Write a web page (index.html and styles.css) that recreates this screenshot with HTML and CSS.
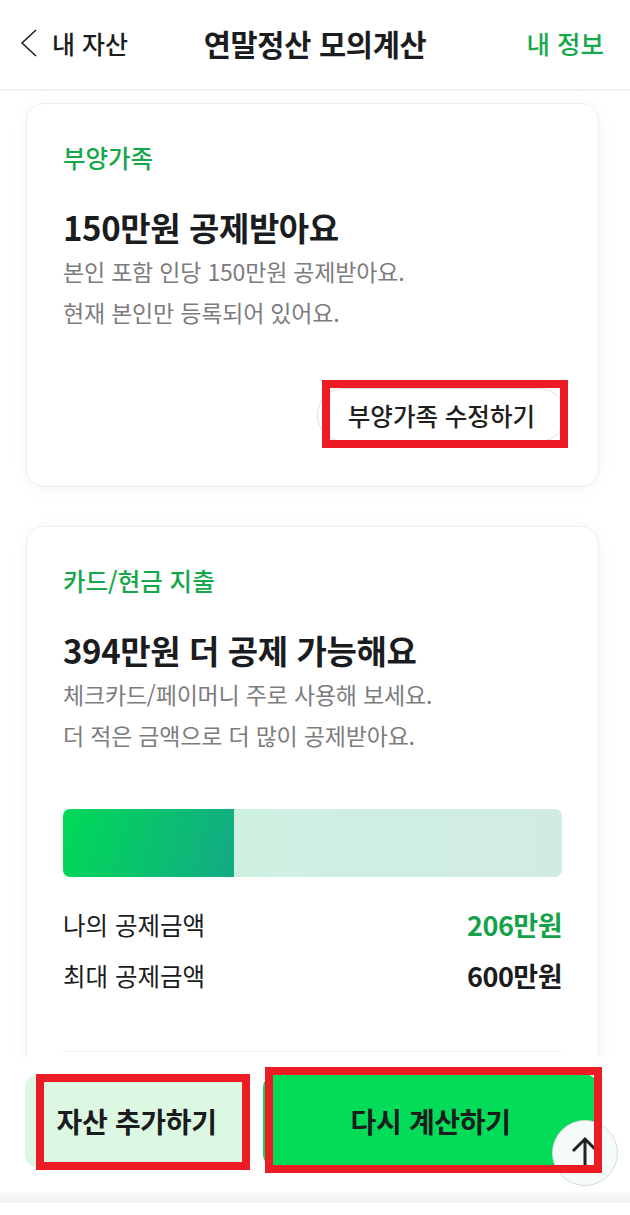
FILE: index.html
```html
<!DOCTYPE html>
<html lang="ko">
<head>
<meta charset="utf-8">
<title>연말정산 모의계산</title>
<link rel="stylesheet" href="styles.css">
</head>
<body>
<header class="topbar">
  <a class="back">
    <svg class="chev" width="18" height="28" viewBox="0 0 18 28"><polyline points="16,1 2,14 16,27" fill="none" stroke="#222" stroke-width="1.6"/></svg>
    <span>내 자산</span>
  </a>
  <h1 class="title">연말정산 모의계산</h1>
  <a class="myinfo">내 정보</a>
</header>

<main class="content">
  <section class="card">
    <div class="label">부양가족</div>
    <h2 class="headline">150만원 공제받아요</h2>
    <p class="desc">본인 포함 인당 150만원 공제받아요.<br>현재 본인만 등록되어 있어요.</p>
    <div class="actions">
      <button class="pill">부양가족 수정하기<span class="mark mark-pill"></span></button>
    </div>
  </section>

  <section class="card">
    <div class="label">카드/현금 지출</div>
    <h2 class="headline">394만원 더 공제 가능해요</h2>
    <p class="desc">체크카드/페이머니 주로 사용해 보세요.<br>더 적은 금액으로 더 많이 공제받아요.</p>
    <div class="bar"><div class="bar-fill" style="width:34.33%"></div></div>
    <div class="rows">
      <div class="row"><span>나의 공제금액</span><strong class="green">206만원</strong></div>
      <div class="row"><span>최대 공제금액</span><strong>600만원</strong></div>
    </div>
    <div class="divider"></div>
  </section>
</main>

<footer class="bottombar">
  <div class="btns">
    <button class="btn btn-light">자산 추가하기<span class="mark mark-light"></span></button>
    <button class="btn btn-green">다시 계산하기<span class="mark mark-green"></span></button>
  </div>
  <div class="band"></div>
  <button class="totop" aria-label="맨 위로">
    <svg width="66" height="66" viewBox="0 0 66 66"><path d="M33 19 V50 M21 31 L33 19 L45 31" fill="none" stroke="#222" stroke-width="3"/></svg>
  </button>
</footer>
</body>
</html>
```
FILE: styles.css
```css
* { box-sizing: border-box; margin: 0; padding: 0; }
html, body {
  width: 630px;
  height: 1215px;
  overflow: hidden;
  background: #fff;
  font-family: "Noto Sans CJK KR", "Noto Sans", sans-serif;
  color: #1b1c1e;
}
button { font-family: inherit; border: none; cursor: pointer; }

.topbar {
  height: 91px;
  border-bottom: 2px solid #f1f1f2;
  display: grid;
  grid-template-columns: 1fr auto 1fr;
  align-items: center;
  padding: 0 26px 3px;
}
.back {
  display: flex;
  align-items: center;
  gap: 14px;
  margin-left: -6px;
  font-size: 25px;
  font-weight: 500;
  line-height: 30px;
}
.chev { display: block; }
.title {
  font-size: 29.5px;
  font-weight: 700;
  line-height: 34px;
  letter-spacing: -0.3px;
}
.myinfo {
  justify-self: end;
  font-size: 25.5px;
  font-weight: 500;
  line-height: 30px;
  color: #18a84d;
}

.content {
  padding: 12px 31px 0 26px;
  display: flex;
  flex-direction: column;
  gap: 39px;
}
.card {
  background: #fff;
  border: 1px solid #eceef1;
  border-radius: 18px;
  box-shadow: 0 2px 18px rgba(0, 0, 0, 0.045);
  padding: 39px 36px 44px;
}
.label {
  font-size: 24.5px;
  line-height: 30px;
  font-weight: 500;
  color: #17a74b;
}
.headline {
  margin-top: 34px;
  font-size: 33px;
  line-height: 40px;
  font-weight: 700;
  letter-spacing: -0.4px;
  color: #1b1c1e;
}
.desc {
  margin-top: 4px;
  font-size: 23px;
  line-height: 41px;
  color: #7c7c7e;
  letter-spacing: -0.2px;
}
.actions {
  margin-top: 55px;
  display: flex;
  justify-content: flex-end;
  margin-right: -4px;
}
.pill {
  position: relative;
  height: 54px;
  padding: 0 30px;
  border: 1px solid #dedfe1;
  border-radius: 27px;
  background: #fff;
  font-size: 24.5px;
  font-weight: 500;
  color: #1f1f21;
}

.bar {
  margin-top: 53px;
  height: 68px;
  border-radius: 7px;
  background: linear-gradient(90deg, #ccf3df, #d1ebe4);
  overflow: hidden;
}
.bar-fill {
  height: 100%;
  background: linear-gradient(105deg, #00da56 0%, #13aa85 100%);
}
.rows {
  margin-top: 30px;
  display: flex;
  flex-direction: column;
  gap: 17px;
}
.row {
  display: flex;
  justify-content: space-between;
  align-items: center;
  height: 34px;
  font-size: 24.5px;
  color: #1b1c1e;
}
.row strong {
  font-size: 27px;
  font-weight: 700;
  letter-spacing: -0.5px;
}
.row .green { color: #15a349; }
.divider {
  margin-top: 59px;
  border-top: 1px solid #eef0f2;
  height: 120px;
}

.bottombar {
  position: fixed;
  left: 0;
  right: 0;
  bottom: 0;
  height: 158px;
  background: #fff;
  padding: 17px 32px 0 25px;
  display: flex;
  flex-direction: column;
}
.btns {
  display: flex;
  gap: 15px;
}
.btn {
  position: relative;
  height: 94px;
  border-radius: 14px;
  font-size: 28px;
  font-weight: 700;
  color: #1b1c1e;
  letter-spacing: -0.3px;
}
.btn-light { flex: 2; background: #dcf8e3; }
.btn-green { flex: 3; background: #02dc58; }
.band {
  margin: 24px -32px 0 -25px;
  height: 11px;
  background: linear-gradient(#f9fafb, #f2f3f5);
}
.totop {
  position: absolute;
  left: 552px;
  top: 63px;
  width: 66px;
  height: 66px;
  border-radius: 50%;
  background: #f5fbf8;
  border: 1px solid #d9d9d9;
  z-index: 2;
  display: flex;
  align-items: center;
  justify-content: center;
}
.totop svg { display: block; margin: -1px; }

.mark {
  position: absolute;
  border: 8px solid #ed1c24;
  pointer-events: none;
  z-index: 3;
}
.mark-pill { top: -9px; left: 4px; right: -3px; bottom: -7px; }
.mark-light { top: 0; left: 11px; right: -2px; bottom: -2px; }
.mark-green { top: -7px; left: 2px; right: -4px; bottom: -5px; }
```
